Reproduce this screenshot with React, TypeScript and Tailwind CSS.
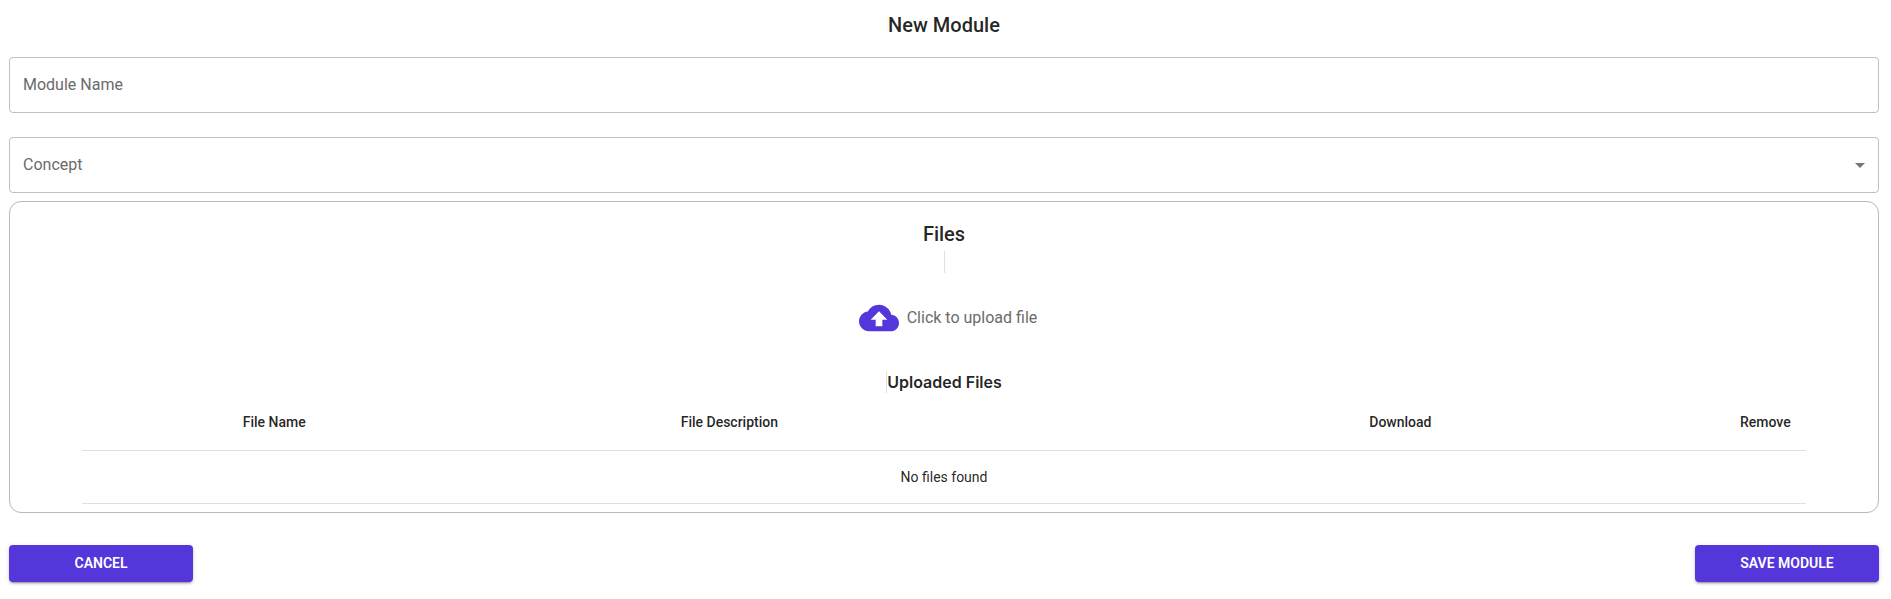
import React from "react";

function TextField({ id, label }: { id: string; label: string }) {
  return (
    <input
      id={id}
      type="text"
      aria-label={label}
      placeholder={label}
      className="block h-14 w-full rounded border border-[#c0c0c0] bg-white px-[13px] pb-0.5 text-base text-black/87 outline-none placeholder:text-[#6b6b6b] placeholder:opacity-100 focus:border-[#5436da]"
    />
  );
}

function SelectField({ id, label }: { id: string; label: string }) {
  return (
    <div className="relative">
      <select
        id={id}
        aria-label={label}
        defaultValue=""
        className="block h-14 w-full appearance-none rounded border border-[#c0c0c0] bg-white px-[13px] text-base text-[#6b6b6b] outline-none focus:border-[#5436da]"
      >
        <option value="">{label}</option>
      </select>
      <svg
        viewBox="0 0 24 24"
        aria-hidden="true"
        className="pointer-events-none absolute top-4 right-[7px] size-6 fill-[#757575]"
      >
        <path d="M7 10l5 5 5-5z" />
      </svg>
    </div>
  );
}

function ActionButton({ children }: { children: React.ReactNode }) {
  return (
    <button
      type="button"
      className="h-[37px] w-[184px] rounded bg-[#5436da] pb-0.5 text-sm font-semibold text-white uppercase shadow-[0px_3px_1px_-2px_rgba(0,0,0,0.2),0px_2px_2px_0px_rgba(0,0,0,0.14),0px_1px_5px_0px_rgba(0,0,0,0.12)] hover:bg-[#4329b8]"
    >
      {children}
    </button>
  );
}

function FilesTable() {
  const head = "px-4 py-4 text-center font-medium";
  return (
    <table className="w-full table-fixed border-collapse text-sm">
      <colgroup>
        <col className="w-[22.3%]" />
        <col className="w-[30.5%]" />
        <col className="w-[4.9%]" />
        <col />
        <col className="w-[82px]" />
      </colgroup>
      <thead>
        <tr className="border-b border-[#e0e0e0] leading-6">
          <th className={head}>File Name</th>
          <th className={head}>File Description</th>
          <td />
          <th className={head}>Download</th>
          <th className={head}>Remove</th>
        </tr>
      </thead>
      <tbody>
        <tr className="border-b border-[#e0e0e0] leading-5">
          <td colSpan={5} className="p-4 text-center">
            No files found
          </td>
        </tr>
      </tbody>
    </table>
  );
}

export default function App() {
  return (
    <main className="bg-white pr-3 pb-4 pl-[9px] font-[Roboto,sans-serif] text-black/87">
      <h1 className="pt-[9px] pb-4 text-center text-xl leading-8 font-medium">New Module</h1>
      <form>
        <div className="flex flex-col gap-6">
          <TextField id="module-name" label="Module Name" />
          <SelectField id="concept" label="Concept" />
        </div>

        <section className="mt-2 rounded-xl border border-[#b8b8b8] px-[72px] pt-4 pb-2">
          <h2 className="text-center text-xl leading-8 font-medium">Files</h2>
          <div className="mx-auto mt-px h-[22px] w-px bg-[#e0e0e0]" />
          <div className="mt-[25px] flex justify-center">
            <label htmlFor="upload" className="flex cursor-pointer items-center gap-2 pl-2">
              <svg viewBox="0 0 24 24" aria-hidden="true" className="size-10 fill-[#5436da]">
                <path d="M19.35 10.04C18.67 6.59 15.64 4 12 4 9.11 4 6.6 5.64 5.35 8.04 2.34 8.36 0 10.91 0 14c0 3.31 2.69 6 6 6h13c2.76 0 5-2.24 5-5 0-2.64-2.05-4.78-4.65-4.96zM14 13v4h-4v-4H7l5-5 5 5h-3z" />
              </svg>
              <span className="text-base text-[#6b6b6b]">Click to upload file</span>
              <input id="upload" type="file" className="sr-only" />
            </label>
          </div>
          <div className="mt-[33px] mb-px flex justify-center">
            <h3 className="border-l border-[#e0e0e0] font-[Inter,sans-serif] text-base leading-[22px] font-semibold">
              Uploaded Files
            </h3>
          </div>
          <FilesTable />
        </section>

        <div className="mt-8 flex justify-between">
          <ActionButton>Cancel</ActionButton>
          <ActionButton>Save Module</ActionButton>
        </div>
      </form>
    </main>
  );
}
